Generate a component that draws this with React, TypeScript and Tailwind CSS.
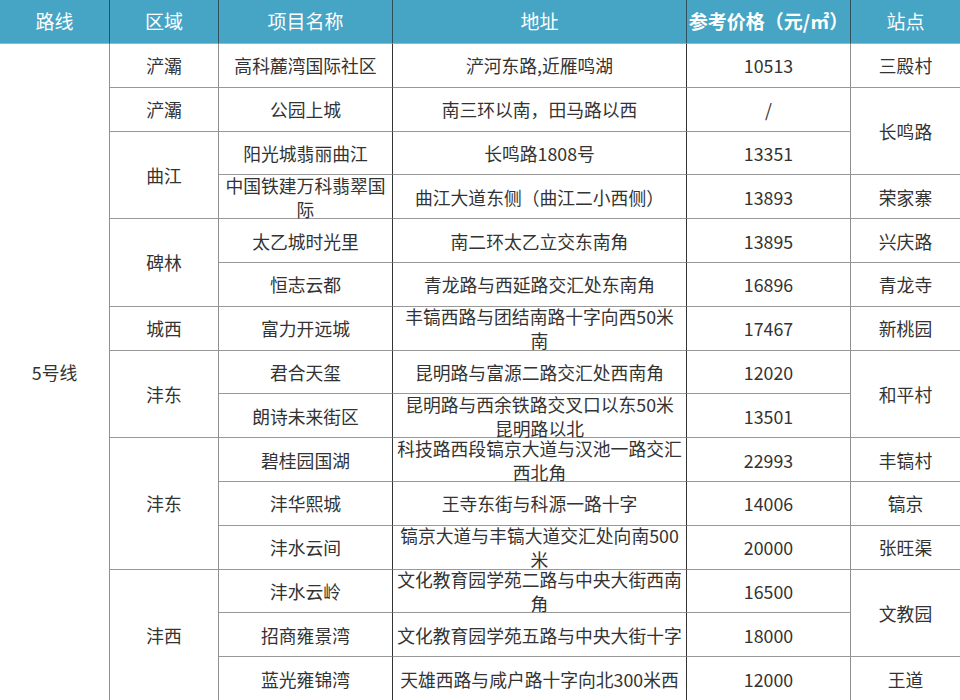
import React from "react";

type Cell = { text: string; cls: string; dark?: boolean };

const font = { fontFamily: '"Noto Sans CJK SC", "Noto Sans", sans-serif' };

const body: Cell[] = [
  { text: "5号线", cls: "col-start-1 row-start-2 row-span-15" },
  // 区域
  { text: "浐灞", cls: "col-start-2 row-start-2" },
  { text: "浐灞", cls: "col-start-2 row-start-3" },
  { text: "曲江", cls: "col-start-2 row-start-4 row-span-2" },
  { text: "碑林", cls: "col-start-2 row-start-6 row-span-2" },
  { text: "城西", cls: "col-start-2 row-start-8" },
  { text: "沣东", cls: "col-start-2 row-start-9 row-span-2" },
  { text: "沣东", cls: "col-start-2 row-start-11 row-span-3" },
  { text: "沣西", cls: "col-start-2 row-start-14 row-span-3" },
  // 项目名称
  { text: "高科麓湾国际社区", cls: "col-start-3 row-start-2", dark: true },
  { text: "公园上城", cls: "col-start-3 row-start-3", dark: true },
  { text: "阳光城翡丽曲江", cls: "col-start-3 row-start-4", dark: true },
  { text: "中国铁建万科翡翠国\n际", cls: "col-start-3 row-start-5", dark: true },
  { text: "太乙城时光里", cls: "col-start-3 row-start-6", dark: true },
  { text: "恒志云都", cls: "col-start-3 row-start-7", dark: true },
  { text: "富力开远城", cls: "col-start-3 row-start-8", dark: true },
  { text: "君合天玺", cls: "col-start-3 row-start-9", dark: true },
  { text: "朗诗未来街区", cls: "col-start-3 row-start-10", dark: true },
  { text: "碧桂园国湖", cls: "col-start-3 row-start-11", dark: true },
  { text: "沣华熙城", cls: "col-start-3 row-start-12", dark: true },
  { text: "沣水云间", cls: "col-start-3 row-start-13", dark: true },
  { text: "沣水云岭", cls: "col-start-3 row-start-14", dark: true },
  { text: "招商雍景湾", cls: "col-start-3 row-start-15", dark: true },
  { text: "蓝光雍锦湾", cls: "col-start-3 row-start-16", dark: true },
  // 地址
  { text: "浐河东路,近雁鸣湖", cls: "col-start-4 row-start-2", dark: true },
  { text: "南三环以南，田马路以西", cls: "col-start-4 row-start-3", dark: true },
  { text: "长鸣路1808号", cls: "col-start-4 row-start-4", dark: true },
  { text: "曲江大道东侧（曲江二小西侧）", cls: "col-start-4 row-start-5", dark: true },
  { text: "南二环太乙立交东南角", cls: "col-start-4 row-start-6", dark: true },
  { text: "青龙路与西延路交汇处东南角", cls: "col-start-4 row-start-7", dark: true },
  { text: "丰镐西路与团结南路十字向西50米\n南", cls: "col-start-4 row-start-8", dark: true },
  { text: "昆明路与富源二路交汇处西南角", cls: "col-start-4 row-start-9", dark: true },
  { text: "昆明路与西余铁路交叉口以东50米\n昆明路以北", cls: "col-start-4 row-start-10", dark: true },
  { text: "科技路西段镐京大道与汉池一路交汇\n西北角", cls: "col-start-4 row-start-11", dark: true },
  { text: "王寺东街与科源一路十字", cls: "col-start-4 row-start-12", dark: true },
  { text: "镐京大道与丰镐大道交汇处向南500\n米", cls: "col-start-4 row-start-13", dark: true },
  { text: "文化教育园学苑二路与中央大街西南\n角", cls: "col-start-4 row-start-14", dark: true },
  { text: "文化教育园学苑五路与中央大街十字", cls: "col-start-4 row-start-15", dark: true },
  { text: "天雄西路与咸户路十字向北300米西", cls: "col-start-4 row-start-16", dark: true },
  // 价格
  { text: "10513", cls: "col-start-5 row-start-2" },
  { text: "/", cls: "col-start-5 row-start-3" },
  { text: "13351", cls: "col-start-5 row-start-4" },
  { text: "13893", cls: "col-start-5 row-start-5" },
  { text: "13895", cls: "col-start-5 row-start-6" },
  { text: "16896", cls: "col-start-5 row-start-7" },
  { text: "17467", cls: "col-start-5 row-start-8" },
  { text: "12020", cls: "col-start-5 row-start-9" },
  { text: "13501", cls: "col-start-5 row-start-10" },
  { text: "22993", cls: "col-start-5 row-start-11" },
  { text: "14006", cls: "col-start-5 row-start-12" },
  { text: "20000", cls: "col-start-5 row-start-13" },
  { text: "16500", cls: "col-start-5 row-start-14" },
  { text: "18000", cls: "col-start-5 row-start-15" },
  { text: "12000", cls: "col-start-5 row-start-16" },
  // 站点
  { text: "三殿村", cls: "col-start-6 row-start-2" },
  { text: "长鸣路", cls: "col-start-6 row-start-3 row-span-2" },
  { text: "荣家寨", cls: "col-start-6 row-start-5" },
  { text: "兴庆路", cls: "col-start-6 row-start-6" },
  { text: "青龙寺", cls: "col-start-6 row-start-7" },
  { text: "新桃园", cls: "col-start-6 row-start-8" },
  { text: "和平村", cls: "col-start-6 row-start-9 row-span-2" },
  { text: "丰镐村", cls: "col-start-6 row-start-11" },
  { text: "镐京", cls: "col-start-6 row-start-12" },
  { text: "张旺渠", cls: "col-start-6 row-start-13" },
  { text: "文教园", cls: "col-start-6 row-start-14 row-span-2" },
  { text: "王道", cls: "col-start-6 row-start-16" },
];

const headers = [
  { text: "路线", cls: "col-start-1" },
  { text: "区域", cls: "col-start-2" },
  { text: "项目名称", cls: "col-start-3" },
  { text: "地址", cls: "col-start-4" },
  { text: "参考价格（元/㎡）", cls: "col-start-5 font-bold text-[17.5px]" },
  { text: "站点", cls: "col-start-6" },
];

export default function App() {
  return (
    <div className="w-[960px] h-[700px] overflow-hidden bg-white" style={font}>
      <div className="grid grid-cols-[110px_109px_174px_294px_164px_109px] grid-rows-[44px_repeat(15,43.8px)]">
        {headers.map((h, i) => (
          <div
            key={"h" + i}
            className={`row-start-1 flex items-center justify-center bg-[#46a5c5] text-white text-[19px] whitespace-nowrap border-b border-[#7cc0d6] ${
              i < 5 ? "border-r border-r-[#2e4f5c]" : ""
            } ${h.cls}`}
          >
            {h.text}
          </div>
        ))}
        {body.map((c, i) => (
          <div
            key={i}
            className={`flex items-center justify-center text-center text-[#333333] text-[17.8px] leading-[24px] whitespace-pre border-b border-[#999999] ${
              c.cls.startsWith("col-start-6") ? "" : "border-r"
            } ${c.dark ? "border-r-[#333333]" : "border-r-[#8f8f8f]"} ${c.cls}`}
          >
            <span>{c.text}</span>
          </div>
        ))}
      </div>
    </div>
  );
}
